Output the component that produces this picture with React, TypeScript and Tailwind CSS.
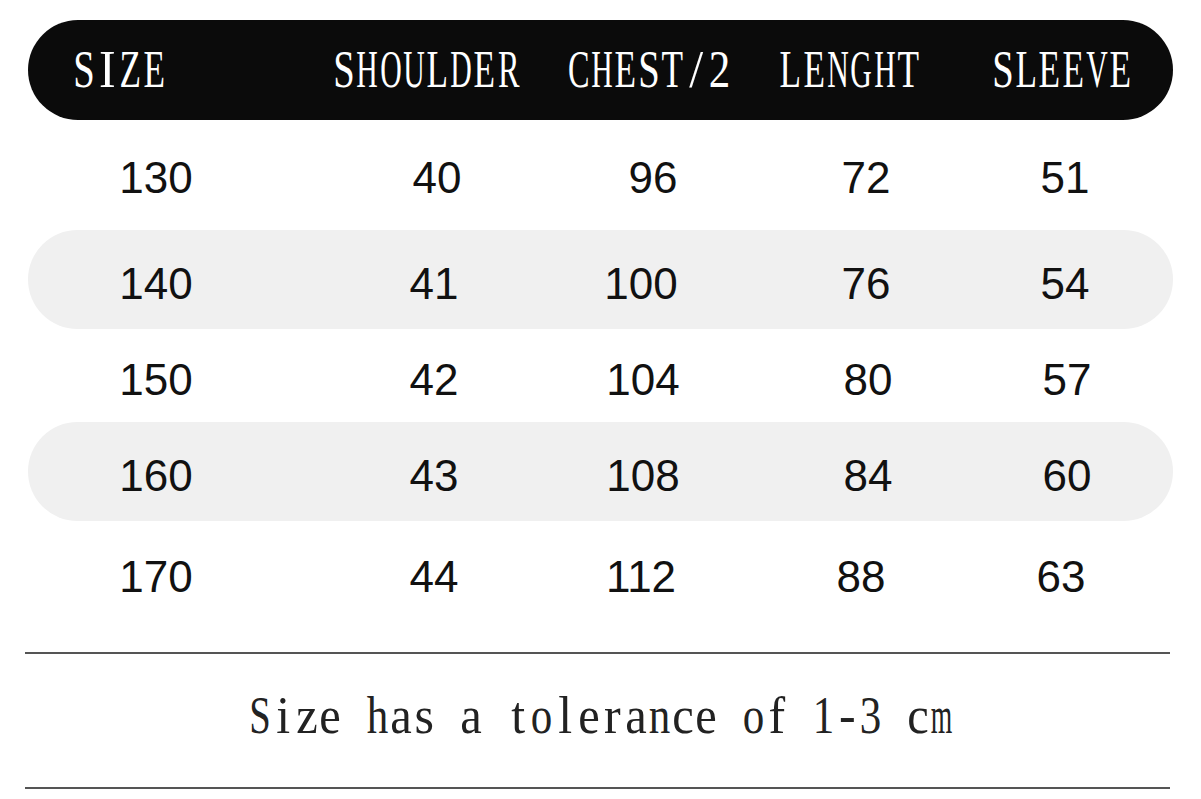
import React from 'react';

type Cell = { value: string; shift?: string };

const headers = [
  { label: 'SIZE', width: 'w-[260px]' },
  { label: 'SHOULDER', width: 'w-[235px]' },
  { label: 'CHEST/2', width: 'w-[212px]' },
  { label: 'LENGHT', width: 'w-[212px]' },
  { label: 'SLEEVE', width: 'w-[160px]' },
];

const cellMargins = ['ml-[68px]', 'ml-[158px]', 'ml-[89px]', 'ml-[103px]', 'ml-[79px]'];

const rows: { cells: Cell[]; shaded: boolean; height: string; pad: string }[] = [
  {
    cells: [{ value: '130' }, { value: '40', shift: 'translate-x-[3px]' }, { value: '96', shift: 'translate-x-[10px]' }, { value: '72' }, { value: '51' }],
    shaded: false,
    height: 'h-[110px]',
    pad: 'pt-[6px]',
  },
  {
    cells: [{ value: '140' }, { value: '41' }, { value: '100', shift: 'translate-x-[-2px]' }, { value: '76' }, { value: '54' }],
    shaded: true,
    height: 'h-[99px]',
    pad: 'pt-[9px]',
  },
  {
    cells: [{ value: '150' }, { value: '42' }, { value: '104' }, { value: '80', shift: 'translate-x-[2px]' }, { value: '57', shift: 'translate-x-[2px]' }],
    shaded: false,
    height: 'h-[93px]',
    pad: 'pt-[9px]',
  },
  {
    cells: [{ value: '160' }, { value: '43' }, { value: '108' }, { value: '84', shift: 'translate-x-[2px]' }, { value: '60', shift: 'translate-x-[2px]' }],
    shaded: true,
    height: 'h-[99px]',
    pad: 'pt-[8px]',
  },
  {
    cells: [{ value: '170' }, { value: '44' }, { value: '112', shift: 'translate-x-[-2px]' }, { value: '88', shift: 'translate-x-[-5px]' }, { value: '63', shift: 'translate-x-[-4px]' }],
    shaded: false,
    height: 'h-[112px]',
    pad: 'pt-0',
  },
];

// Times advance widths (em) for the glyphs we use
const advance: Record<string, number> = {
  S: 0.556, H: 0.722, O: 0.722, U: 0.722, L: 0.611, D: 0.722, E: 0.611, R: 0.667,
  C: 0.667, T: 0.611, I: 0.333, Z: 0.611, N: 0.722, G: 0.722, V: 0.722,
  a: 0.444, c: 0.444, e: 0.444, h: 0.5, n: 0.5, o: 0.5, m: 0.778, z: 0.444,
};

const FONT_PX = 50;
const CELL_PX = 21.5;

function squeeze(ch: string) {
  const w = (advance[ch] ?? (/[0-9]/.test(ch) ? 0.5 : 0.3)) * FONT_PX;
  return Math.min(1, CELL_PX / w);
}

// narrow serif, fixed pitch: one cell per character
function MonoText({ text }: { text: string }) {
  return (
    <span className="inline-flex scale-y-[1.05] font-['Liberation_Serif','Times_New_Roman',serif] text-[50px] leading-none">
      {text.split('').map((ch, i) => (
        <span key={i} className="flex w-[23.5px] shrink-0 justify-center whitespace-pre">
          <span className="inline-block" style={{ transform: `scaleX(${squeeze(ch)})` }}>
            {ch}
          </span>
        </span>
      ))}
    </span>
  );
}

export default function App() {
  return (
    <div className="h-[799px] w-[1201px] overflow-hidden bg-white">
      <div className="ml-[28px] w-[1145px] pt-[20px]">
        <div className="flex h-[100px] items-center rounded-full bg-[#0b0b0b] pb-[2px] pl-[44px] text-white">
          {headers.map((h) => (
            <div key={h.label} className={`${h.width} shrink-0`}>
              <MonoText text={h.label} />
            </div>
          ))}
        </div>

        {rows.map((row, i) => (
          <div
            key={i}
            className={`flex items-center ${row.height} ${row.pad} ${row.shaded ? 'rounded-full bg-[#f0f0f0]' : ''}`}
          >
            {row.cells.map((cell, j) => (
              <div
                key={j}
                className={`${cellMargins[j]} w-[120px] shrink-0 text-center font-['Liberation_Sans',Arial,sans-serif] text-[44px] leading-none text-[#111]`}
              >
                <span className={`inline-block ${cell.shift ?? ''}`}>{cell.value}</span>
              </div>
            ))}
          </div>
        ))}
      </div>

      <div className="ml-[25px] mt-[19px] w-[1145px]">
        <div className="h-[2px] bg-[#555]" />
        <div className="flex h-[133px] items-center justify-center pb-[12px] pl-[6px] text-[#222]">
          <MonoText text="Size has a tolerance of 1-3 cm" />
        </div>
        <div className="h-[2px] bg-[#555]" />
      </div>
    </div>
  );
}
